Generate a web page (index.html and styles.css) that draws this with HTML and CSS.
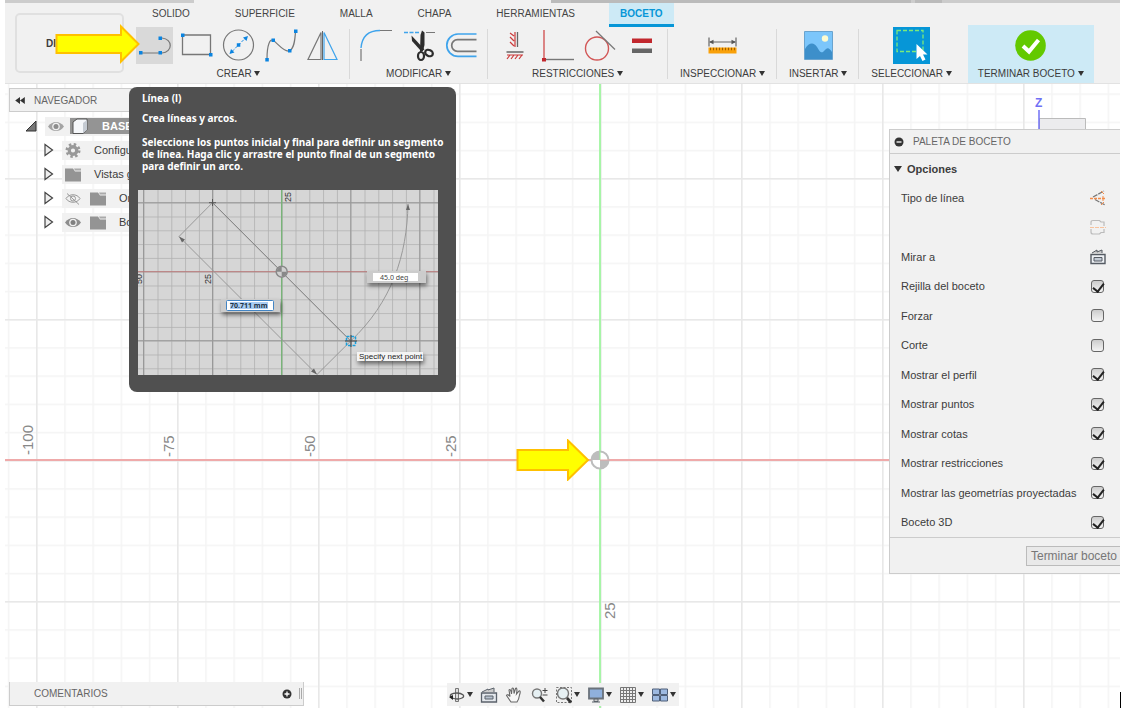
FILE: index.html
```html
<!DOCTYPE html>
<html lang="es">
<head>
    <meta charset="UTF-8">
    <meta name="viewport" content="width=device-width, initial-scale=1.0">
    <title>Boceto</title>
    <link rel="stylesheet" href="styles.css">
</head>
<body>
    <div class="app">
        <header class="ribbon">
            <div class="doc-strip"></div>
            <div class="ribbon-main">
                <button class="workspace-button" type="button">DISEÑO</button>
                <div class="ribbon-content">
                    <nav class="tabs">
                        <a class="tab" href="#">SOLIDO</a>
                        <a class="tab" href="#">SUPERFICIE</a>
                        <a class="tab" href="#">MALLA</a>
                        <a class="tab" href="#">CHAPA</a>
                        <a class="tab" href="#">HERRAMIENTAS</a>
                        <a class="tab active" href="#">BOCETO</a>
                    </nav>
                    <div class="groups">
                        <div class="group">
                            <div class="tools">
                                <button class="tool selected" type="button" aria-label="Línea">
                                    <svg viewBox="0 0 37 37"><g fill="none" stroke="#777" stroke-width="1.2"><path d="M6 26H24M26 11C37 12 37 25 26 26"/></g><g fill="#0b84e0"><path d="M3 24h3.500v3.500H3zM22.500 24h3.500v3.500h-3.500zM22.500 9.500h3.500v3.500h-3.500z"/></g></svg>
                                </button>
                                <button class="tool" type="button" aria-label="Rectángulo">
                                    <svg viewBox="0 0 37 37"><path d="M4.500 8h28v19.500h-28z" fill="none" stroke="#777" stroke-width="1.300"/><path d="M3 6.500h3.500V10H3zM31 26h3.500v3.500H31z" fill="#0b84e0"/></svg>
                                </button>
                                <button class="tool" type="button" aria-label="Círculo">
                                    <svg viewBox="0 0 37 37"><circle cx="18.500" cy="18" r="15" fill="none" stroke="#777" stroke-width="1.200"/><path d="M12 24.500 25 11.500" stroke="#1e8fe6" stroke-dasharray="3 1.500"/><path d="M16.800 16.300h3.500v3.500h-3.500zM28 9l-1.500 5-3.500-3.500zM9.500 27l1.500-5 3.500 3.500z" fill="#0b84e0"/></svg>
                                </button>
                                <button class="tool" type="button" aria-label="Spline">
                                    <svg viewBox="0 0 37 37"><path d="M5 32C5 18 8 11 11.500 13.500C16 17 22 25 27 24C32 22 33 14 33.500 4" fill="none" stroke="#777" stroke-width="1.200"/><path d="M3.300 31h3.500v3.500H3.300zM9.500 11.500H13V15H9.500zM26 22h3.500v3.500H26zM32 2.500h3.500V6H32z" fill="#0b84e0"/></svg>
                                </button>
                                <button class="tool" type="button" aria-label="Simetría">
                                    <svg viewBox="0 0 37 37"><path d="M17 5.500V32.500H4z" fill="none" stroke="#777" stroke-width="1.200"/><path d="M20 5.500V32.500H33z" fill="none" stroke="#3fa4ec" stroke-width="1.200"/><path d="M18.500 4v29" stroke="#666"/></svg>
                                </button>
                            </div>
                            <button class="menu" type="button">CREAR <i class="caret"></i></button>
                        </div>
                        <div class="group">
                            <div class="tools">
                                <button class="tool" type="button" aria-label="Empalme">
                                    <svg viewBox="0 0 37 37"><path d="M3 21C4 9 11 3.500 22 3.500" fill="none" stroke="#3fa4ec" stroke-width="1.400"/><path d="M22 3.500h12M3 22v12" stroke="#777" stroke-width="1.200"/></svg>
                                </button>
                                <button class="tool" type="button" aria-label="Recortar">
                                    <svg viewBox="0 0 37 37"><path d="M4 5.500h15" stroke="#3fa4ec" stroke-width="1.500" stroke-dasharray="4 1.500"/><path d="M26 5.500h9" stroke="#777"/><path d="M11.500 8.500 12 14 21 24 24.500 22.500z" fill="#2d2d2d"/><path d="M22 3.500 24.500 5.500V18L23 24 20 25 20.500 8z" fill="#2d2d2d"/><ellipse cx="21" cy="29" rx="3" ry="4" fill="none" stroke="#2d2d2d" stroke-width="2.200"/><ellipse cx="29" cy="26" rx="4" ry="3" fill="none" stroke="#2d2d2d" stroke-width="2.200" transform="rotate(25 29 26)"/></svg>
                                </button>
                                <button class="tool" type="button" aria-label="Desfase">
                                    <svg viewBox="0 0 37 37"><path d="M34.500 7H16a11.200 11.200 0 0 0 0 22.400h18.500" fill="none" stroke="#3fa4ec" stroke-width="1.700"/><path d="M34.500 12.700H15.500a5.700 5.700 0 0 0 0 11.600h19" fill="none" stroke="#777" stroke-width="1.700"/></svg>
                                </button>
                            </div>
                            <button class="menu" type="button">MODIFICAR <i class="caret"></i></button>
                        </div>
                        <div class="group">
                            <div class="tools">
                                <button class="tool" type="button" aria-label="Horizontal/Vertical">
                                    <svg viewBox="0 0 37 37"><path d="M19 5v15M11 28h16M18 28l-3 4M22 28l-3 4M26 28l-3 4M14 28l-3 4M18 9l-4-3M18 14l-4-4M18 19l-4-4" stroke="#cc3b3b" stroke-width="1.200"/><path d="M21.500 5v15M10.500 25h17" stroke="#666" stroke-width="1.300"/></svg>
                                </button>
                                <button class="tool" type="button" aria-label="Perpendicular">
                                    <svg viewBox="0 0 37 37"><path d="M6 3v29" stroke="#d25656" stroke-width="1.400"/><path d="M8 32.500h28" stroke="#777" stroke-width="1.400"/><path d="M4 31h4v3.500H4z" fill="#c1272d"/></svg>
                                </button>
                                <button class="tool" type="button" aria-label="Tangente">
                                    <svg viewBox="0 0 37 37"><circle cx="17" cy="21.500" r="11.500" fill="none" stroke="#d25656" stroke-width="1.400"/><path d="M16 4 35 22.500" stroke="#777" stroke-width="1.200"/></svg>
                                </button>
                                <button class="tool" type="button" aria-label="Igual">
                                    <svg viewBox="0 0 37 37"><path d="M10 11.500h20v4.500H10z" fill="#c1272d"/><path d="M10 21.500h20v4.500H10z" fill="#666"/></svg>
                                </button>
                            </div>
                            <button class="menu" type="button">RESTRICCIONES <i class="caret"></i></button>
                        </div>
                        <div class="group wide">
                            <div class="tools">
                                <button class="tool" type="button" aria-label="Medir">
                                    <svg viewBox="0 0 37 37"><path d="M5 10.500v9M32 10.500v9M6 15h25" stroke="#666" stroke-width="1.200"/><path d="M5 15l4.500-2.200v4.400zM32 15l-4.500-2.200v4.400z" fill="#555"/><path d="M4.500 20.500h28v6h-28z" fill="#f9a10a"/><path d="M6 22h25" stroke="#a05f00" stroke-width="2.500" stroke-dasharray="1 2"/></svg>
                                </button>
                            </div>
                            <button class="menu" type="button">INSPECCIONAR <i class="caret"></i></button>
                        </div>
                        <div class="group wide">
                            <div class="tools">
                                <button class="tool" type="button" aria-label="Insertar imagen">
                                    <svg viewBox="0 0 37 37"><path d="M4.500 4.500h28v28h-28z" fill="#7cc6fb" stroke="#6aa4cf"/><circle cx="25" cy="11.500" r="3.200" fill="#fdfbd0"/><path d="M5 22c4-7 9-7 12-2 3 5 4 6 6 5 4-4 5-6 9 0v7H5z" fill="#3d8fca"/></svg>
                                </button>
                            </div>
                            <button class="menu" type="button">INSERTAR <i class="caret"></i></button>
                        </div>
                        <div class="group wide">
                            <div class="tools">
                                <button class="tool" type="button" aria-label="Seleccionar">
                                    <svg viewBox="0 0 37 37"><path d="M0 0h37v37H0z" fill="#0696d7"/><path d="M4 3.500h26v21H4z" fill="none" stroke="#7bea7b" stroke-width="1.300" stroke-dasharray="4 2"/><path d="M23.500 17v15l3.500-3 2.500 5 3-1.500-2.500-5h4.500z" fill="#fff"/></svg>
                                </button>
                            </div>
                            <button class="menu" type="button">SELECCIONAR <i class="caret"></i></button>
                        </div>
                        <div class="group finish">
                            <div class="tools">
                                <button class="tool" type="button" aria-label="Terminar boceto">
                                    <svg viewBox="0 0 37 37"><circle cx="18.500" cy="18.500" r="15.300" fill="#63c900"/><path d="M11 19l6 5.500L26.500 13" fill="none" stroke="#fff" stroke-width="4"/></svg>
                                </button>
                            </div>
                            <button class="menu" type="button">TERMINAR BOCETO <i class="caret"></i></button>
                        </div>
                    </div>
                </div>
            </div>
        </header>

        <main class="canvas">
            <svg class="grid">
                <defs>
                    <pattern id="minor" x="595" y="376" width="28.200" height="28.200" patternUnits="userSpaceOnUse">
                        <path d="M0 0H28.200M0 0V28.200" stroke="#f4f4f4" stroke-width="3"/>
                    </pattern>
                    <pattern id="major" x="595" y="376" width="141" height="141" patternUnits="userSpaceOnUse">
                        <path d="M0 0H141M0 0V141" stroke="#e8e8e8" stroke-width="3"/>
                    </pattern>
                </defs>
                <rect width="100%" height="100%" fill="url(#minor)"/>
                <rect width="100%" height="100%" fill="url(#major)"/>
                <path d="M0 376H4000" stroke="#efaaaa" stroke-width="1.800"/>
                <path d="M595 0V4000" stroke="#a0f5a0" stroke-width="1.800"/>
                <g class="grid-numbers">
                    <text transform="translate(28 371) rotate(-90)">-100</text>
                    <text transform="translate(169 373) rotate(-90)">-75</text>
                    <text transform="translate(310 373) rotate(-90)">-50</text>
                    <text transform="translate(451 373) rotate(-90)">-25</text>
                    <text transform="translate(610 535) rotate(-90)">25</text>
                </g>
                <circle cx="595" cy="376" r="8.500" fill="#fff" stroke="#bdbdbd" stroke-width="2"/>
                <path d="M595 376V367.500A8.500 8.500 0 0 0 586.500 376zM595 376V384.500A8.500 8.500 0 0 0 603.500 376z" fill="#bdbdbd"/>
                <path d="M595 367v9" stroke="#98f098"/>
                <path d="M595 376h9" stroke="#e9a3a3"/>
            </svg>

            <svg class="view-cube" viewBox="0 0 56 40">
                <path d="M9.500 24.500h46V40h-46z" fill="#ececee" stroke="#bbb"/>
                <path d="M9 16v24" stroke="#7070f5" stroke-width="1.500"/>
                <text x="5" y="13">Z</text>
            </svg>

            <section class="browser">
                <h2 class="panel-title"><svg class="rewind" viewBox="0 0 11 8"><path d="M5.500 0v8L0 4zM11 0v8L5.500 4z" fill="#333"/></svg>NAVEGADOR</h2>
                <ul class="tree">
                    <li class="root">
                        <svg class="expander" viewBox="0 0 12 12"><path d="M11 1v10H1z" fill="#777" stroke="#333"/></svg>
                        <span class="node">
                            <svg class="eye" viewBox="0 0 16 12"><path d="M0 6C4 0 12 0 16 6C12 12 4 12 0 6z" fill="#a4a4a4"/><circle cx="8" cy="6" r="3.800" fill="#f1f1f1"/><circle cx="8" cy="6" r="2.500" fill="#8d8d8d"/></svg>
                            <span class="root-name"><svg class="cube" viewBox="0 0 18 18"><path d="M2 5l4-3h10v11l-4 3.500H2z" fill="#f5f7fa" stroke="#555"/><path d="M12 6v10l4-3V3z" fill="#c5cbd3"/></svg>BASE</span>
                        </span>
                    </li>
                    <li>
                        <svg class="expander" viewBox="0 0 12 14"><path d="M2 1.500v11l7.500-5.500z" fill="#eee" stroke="#444" stroke-width="1.200"/></svg>
                        <span class="node"><svg class="eye" viewBox="0 0 16 16"><circle cx="8" cy="8" r="4" fill="none" stroke="#999" stroke-width="3.500"/><circle cx="8" cy="8" r="6.500" fill="none" stroke="#999" stroke-width="3" stroke-dasharray="2.550 2.550"/></svg><span class="node-name">Configuración</span></span>
                    </li>
                    <li>
                        <svg class="expander" viewBox="0 0 12 14"><path d="M2 1.500v11l7.500-5.500z" fill="#eee" stroke="#444" stroke-width="1.200"/></svg>
                        <span class="node"><svg class="folder" viewBox="0 0 16 14"><path d="M0 1h8l2 3h6v10H0z" fill="#949494"/><path d="M9 1h7v2h-6z" fill="#aaa"/></svg><span class="node-name">Vistas guardadas</span></span>
                    </li>
                    <li>
                        <svg class="expander" viewBox="0 0 12 14"><path d="M2 1.500v11l7.500-5.500z" fill="#eee" stroke="#444" stroke-width="1.200"/></svg>
                        <span class="node"><svg class="eye" viewBox="0 0 16 12"><path d="M1 6C4 1 12 1 15 6C12 11 4 11 1 6zM2 1l12 11" fill="none" stroke="#999"/><circle cx="8" cy="6" r="2.500" fill="none" stroke="#999"/></svg><svg class="folder" viewBox="0 0 16 14"><path d="M0 1h8l2 3h6v10H0z" fill="#949494"/><path d="M9 1h7v2h-6z" fill="#aaa"/></svg><span class="node-name">Origen</span></span>
                    </li>
                    <li>
                        <svg class="expander" viewBox="0 0 12 14"><path d="M2 1.500v11l7.500-5.500z" fill="#eee" stroke="#444" stroke-width="1.200"/></svg>
                        <span class="node"><svg class="eye" viewBox="0 0 16 12"><path d="M0 6C4 0 12 0 16 6C12 12 4 12 0 6z" fill="#8d8d8d"/><circle cx="8" cy="6" r="3.800" fill="#f1f1f1"/><circle cx="8" cy="6" r="2.500" fill="#808080"/></svg><svg class="folder" viewBox="0 0 16 14"><path d="M0 1h8l2 3h6v10H0z" fill="#949494"/><path d="M9 1h7v2h-6z" fill="#aaa"/></svg><span class="node-name">Bocetos</span></span>
                    </li>
                </ul>
            </section>

            <aside class="tooltip">
                <p class="tooltip-title">Línea (l)</p>
                <p class="tooltip-lead">Crea líneas y arcos.</p>
                <p class="tooltip-text">Seleccione los puntos inicial y final para definir un segmento de línea. Haga clic y arrastre el punto final de un segmento para definir un arco.</p>
                <svg class="tooltip-picture" viewBox="0 0 300 185">
                    <defs>
                        <pattern id="tipMinor" x="143.700" y="81.700" width="13.800" height="13.800" patternUnits="userSpaceOnUse">
                            <path d="M0 0H13.800M0 0V13.800" stroke="#b0b0b0" stroke-width="1.600"/>
                        </pattern>
                        <filter id="shadow"><feDropShadow dx="1" dy="3" stdDeviation="2" flood-opacity="0.5"/></filter>
                    </defs>
                    <rect width="300" height="185" fill="#d6d6d6"/>
                    <rect width="300" height="185" fill="url(#tipMinor)"/>
                    <path d="M5.500 0V185M74.500 0V185M212.700 0V185M281.700 0V185M0 12.700H300M0 150.700H300" stroke="#999"/>
                    <path d="M0 81.700H300" stroke="#b87878"/>
                    <path d="M143.700 0V185" stroke="#74b374" stroke-width="1.300"/>
                    <path d="M74.500 12.700 212.700 151" stroke="#777"/>
                    <path d="M74.500 12.700 41 46.500 179 184.500 212.700 151C254 112 269 65 270 14" fill="none" stroke="#999"/>
                    <path d="M41 46.500l6 3-3 3zM179 184.500l-6-3 3-3zM270 14l-2 6h4z" fill="#666"/>
                    <path d="M71 12.700h7M74.500 9v7" stroke="#555"/>
                    <circle cx="143.700" cy="81.700" r="5.500" fill="#d0d0d0" stroke="#888" stroke-width="1.500"/>
                    <path d="M143.700 81.700v-5a5 5 0 0 0-5 5zM143.700 81.700v5a5 5 0 0 0 5-5z" fill="#888"/>
                    <path d="M208.500 146.500h9v9h-9z" fill="none" stroke="#19a0dd" stroke-width="1.500" stroke-dasharray="3 1.500"/>
                    <path d="M207 151h12M213 145v12" stroke="#444"/>
                    <g filter="url(#shadow)">
                        <rect x="83" y="109" width="59" height="13" fill="#ccc"/>
                        <rect x="229" y="81" width="59" height="12" fill="#ccc"/>
                        <rect x="219" y="162" width="66" height="9" fill="#f4f4f4"/>
                    </g>
                    <rect x="88.500" y="110.500" width="47" height="10" rx="1" fill="#fff" stroke="#4385c4"/>
                    <rect x="92" y="112" width="38" height="7" fill="#a9cdf3"/>
                    <rect x="235" y="83" width="45" height="8" fill="#fff"/>
                    <text class="tip-value" x="92" y="118">70.711 mm</text>
                    <text class="tip-value light" x="242" y="90">45.0 deg</text>
                    <text class="tip-prompt" x="221" y="169">Specify next point</text>
                    <text class="tip-number" transform="translate(153 12) rotate(-90)">25</text>
                    <text class="tip-number" transform="translate(73 94) rotate(-90)">25</text>
                    <text class="tip-number" transform="translate(4 94) rotate(-90)">50</text>
                </svg>
            </aside>

            <form class="palette">
                <h2 class="panel-title"><svg class="dot" viewBox="0 0 10 10"><circle cx="5" cy="5" r="4.500" fill="#333"/><path d="M2.500 5h5" stroke="#fff" stroke-width="1.300"/></svg>PALETA DE BOCETO</h2>
                <h3 class="palette-section"><i class="caret"></i>Opciones</h3>
                <ul class="options">
                    <li><span>Tipo de línea</span>
                        <button class="option-button" type="button" aria-label="Construcción"><svg viewBox="0 0 16 16"><path d="M3 7 14 1M5 9.500 15 15" stroke="#777" stroke-width="1.200" stroke-dasharray="5 1"/><path d="M0 8.500h16" stroke="#f28c4b" stroke-width="1.300" stroke-dasharray="3 1"/><path d="M11 1l3 3M11 15l3-3M13 6v5" stroke="#f28c4b"/></svg></button></li>
                    <li><span></span>
                        <button class="option-button" type="button" aria-label="Línea central"><svg viewBox="0 0 16 16"><path d="M1 6V3.500Q1 1.500 3 1.500H9.500L11 3h3v4M1 10v3q0 2 2 2h6.500L11 13.500h3V10" fill="none" stroke="#bbb" stroke-width="1.200"/><path d="M0 8.500h16" stroke="#f7c39e" stroke-dasharray="4 1"/></svg></button></li>
                    <li><span>Mirar a</span>
                        <button class="option-button" type="button" aria-label="Mirar a"><svg viewBox="0 0 16 16"><path d="M1 5.500h14v9H1z" fill="#eef1f5" stroke="#555b63" stroke-width="1.400"/><path d="M4 8.500h8v3.500H4z" fill="#c2cad5" stroke="#555b63"/><path d="M2 4l5-3v2l5-2v3" fill="#ccc" stroke="#555b63"/></svg></button></li>
                    <li><label for="rejilla">Rejilla del boceto</label><input type="checkbox" id="rejilla" checked></li>
                    <li><label for="forzar">Forzar</label><input type="checkbox" id="forzar"></li>
                    <li><label for="corte">Corte</label><input type="checkbox" id="corte"></li>
                    <li><label for="perfil">Mostrar el perfil</label><input type="checkbox" id="perfil" checked></li>
                    <li><label for="puntos">Mostrar puntos</label><input type="checkbox" id="puntos" checked></li>
                    <li><label for="cotas">Mostrar cotas</label><input type="checkbox" id="cotas" checked></li>
                    <li><label for="restricciones">Mostrar restricciones</label><input type="checkbox" id="restricciones" checked></li>
                    <li><label for="geometrias">Mostrar las geometrías proyectadas</label><input type="checkbox" id="geometrias" checked></li>
                    <li><label for="boceto3d">Boceto 3D</label><input type="checkbox" id="boceto3d" checked></li>
                </ul>
                <div class="palette-footer">
                    <button class="finish-button" type="button">Terminar boceto</button>
                </div>
            </form>

            <section class="comments">
                <h2 class="comments-title">COMENTARIOS</h2>
                <svg class="dot" viewBox="0 0 10 10"><circle cx="5" cy="5" r="4.500" fill="#333"/><path d="M2.500 5h5M5 2.500v5" stroke="#fff" stroke-width="1.300"/></svg>
                <span class="grip"></span>
            </section>

            <div class="view-bar">
                <button class="view-button" type="button" aria-label="Órbita"><svg viewBox="0 0 18 18"><path d="M7.500 2.500h3v13h-3z" fill="#ddd" stroke="#777"/><path d="M4 12C0 9 4 7 9 7s9 3 5 5-7 1-10 0" fill="none" stroke="#555" stroke-width="1.300"/><path d="M1 11l4-2v5z" fill="#222"/></svg><i class="caret"></i></button>
                <button class="view-button" type="button" aria-label="Mirar a"><svg viewBox="0 0 18 18"><path d="M1.500 7h15v9h-15z" fill="#e4e8ed" stroke="#5b626b" stroke-width="1.300"/><path d="M5 10h8v3H5z" fill="#b8c2cf" stroke="#5b626b"/><path d="M2 6l6-3v1l6-2v4" fill="#ccc" stroke="#5b626b"/></svg></button>
                <button class="view-button" type="button" aria-label="Encuadre"><svg viewBox="0 0 18 18"><path d="M6 16 1.500 9.500C2 8 4 9 5 10.500L4 4c1-1.500 2 0 2.500 4L7 2.500c1-1.500 2 0 2 5l1.500-5c1-1 2 0 1 5.500L14 5c1.500-.5 1.500 1 .5 4-.5 4-1 5-2.500 7z" fill="#f7f7f7" stroke="#666" stroke-width="1.100"/></svg></button>
                <button class="view-button" type="button" aria-label="Zoom"><svg viewBox="0 0 18 18"><circle cx="7" cy="7.500" r="4.500" fill="#e6f0f3" stroke="#777" stroke-width="1.400"/><path d="M10 11l4 4.500" stroke="#333" stroke-width="2.500"/><path d="M12.500 4.500h5M15 2v5M12.500 9h5" stroke="#444"/></svg></button>
                <button class="view-button" type="button" aria-label="Ajustar"><svg viewBox="0 0 18 18"><path d="M1.500 1.500h15v15h-15z" fill="none" stroke="#777" stroke-dasharray="2 1.500"/><circle cx="8" cy="7.500" r="5.500" fill="#e6f0f3" stroke="#777" stroke-width="1.400"/><path d="M12 12l4 4.500" stroke="#333" stroke-width="2.700"/></svg><i class="caret"></i></button>
                <button class="view-button" type="button" aria-label="Visualización"><svg viewBox="0 0 18 18"><path d="M2 2.500h14v10H2z" fill="#8fb0dc" stroke="#6b727b" stroke-width="1.800"/><path d="M7 13h4v2.500H7zM5 16h8" fill="#ccc" stroke="#5b626b"/></svg><i class="caret"></i></button>
                <button class="view-button" type="button" aria-label="Rejilla"><svg viewBox="0 0 18 18"><path d="M1.500 1.500h15v15h-15zM4.500 1.500v15M7.500 1.500v15M10.500 1.500v15M13.500 1.500v15M1.500 4.500h15M1.500 7.500h15M1.500 10.500h15M1.500 13.500h15" fill="#eee" stroke="#777"/></svg><i class="caret"></i></button>
                <button class="view-button" type="button" aria-label="Ventanas"><svg viewBox="0 0 18 18"><path d="M1.500 3h7v5.500h-7zM9.500 3h7v5.500h-7zM1.500 9.500h7V15h-7zM9.500 9.500h7V15h-7z" fill="#9db9e0" stroke="#4e5f78"/></svg><i class="caret"></i></button>
            </div>
        </main>

        <!-- yellow pointers over the interface -->
        <svg class="pointer pointer-tool" viewBox="0 0 86 40"><path d="M1.500 11H66V2.500L83.500 20 66 37.500V29H1.500z"/></svg>
        <svg class="pointer pointer-origin" viewBox="0 0 74 42"><path d="M1.500 11H52V1.500L72 21 52 40.500V31H1.500z"/></svg>
        <span class="text-cursor"></span>
    </div>
</body>
</html>
```
FILE: styles.css
```css
* {
    box-sizing: border-box;
}

body {
    margin: 0;
    background-color: #fff;
    color: #3c3c3c;
    font-family: "Liberation Sans", Arial, sans-serif;
    font-size: 11px;
}

h2, h3, p, ul {
    margin: 0;
    padding: 0;
    list-style: none;
}

button {
    padding: 0;
    border: 0;
    background: none;
    color: inherit;
    font: inherit;
    cursor: pointer;
}

svg {
    display: block;
    flex: none;
}

.app {
    position: relative;
    display: flex;
    flex-direction: column;
    height: 100vh;
    margin: 0 10px 0 5px;
}

.caret {
    display: inline-block;
    border: 3px solid transparent;
    border-top: 5px solid #333;
    border-bottom: 0;
    vertical-align: 1px;
}

/* ribbon */
.ribbon {
    background-color: #f1f1f1;
    border-bottom: 1px solid #e2e2e2;
}

.doc-strip {
    height: 3px;
    background: linear-gradient(to right, #ccc 189px, #f1f1f1 189px, #f1f1f1 546px, #bbb 546px, #bbb 906px, #ccc 906px, #ccc 910px, #bbb 910px, #bbb 937px, #ccc 937px);
}

.ribbon-main {
    display: flex;
    gap: 12px;
    padding-left: 10px;
}

.workspace-button {
    flex: none;
    width: 109px;
    height: 60px;
    margin-top: 10px;
    padding-left: 29px;
    border: 2px solid #e0e0e0;
    border-radius: 5px;
    font-size: 10px;
    font-weight: bold;
    text-align: left;
}

.ribbon-content {
    flex: 1;
}

.tabs {
    display: flex;
    gap: 23px;
    padding-left: 5px;
}

.tab {
    height: 24px;
    padding: 0 11px;
    color: #444;
    font-size: 10px;
    line-height: 22px;
    text-decoration: none;
}

.tab.active {
    border-bottom: 3px solid #0696d7;
    background-color: #cdeaf6;
    color: #0696d7;
    font-weight: bold;
}

.groups {
    display: flex;
    height: 56px;
}

.group {
    position: relative;
    display: flex;
    flex-direction: column;
    align-items: center;
    padding: 0 9px 0 8px;
}

.group:first-child {
    padding-left: 0;
}

.group:not(:nth-last-child(-n+2)) {
    background: linear-gradient(#d9d9d9, #d9d9d9) right 2px / 1px 50px no-repeat;
}

.group.wide {
    padding: 0 12px;
}

.tools {
    display: flex;
    gap: 5px;
}

.tool {
    width: 37px;
    height: 37px;
}

.tool.selected {
    background-color: #d9d9d9;
}

.menu {
    margin-top: 3px;
    font-size: 10px;
    line-height: 14px;
    white-space: nowrap;
}

.group.finish {
    margin: -2px 0 0 4px;
    padding: 2px 10px 0;
    background-color: #cdeaf6;
}

/* drawing area */
.canvas {
    position: relative;
    flex: 1;
    overflow: hidden;
}

.grid {
    position: absolute;
    inset: 0;
    width: 100%;
    height: 100%;
}

.grid-numbers {
    fill: #888;
    font-size: 15px;
}

.view-cube {
    position: absolute;
    top: 10px;
    right: 34px;
    width: 56px;
    height: 40px;
    fill: #7070f5;
    font-size: 12px;
    font-weight: bold;
}

.panel-title {
    display: flex;
    align-items: center;
    height: 24px;
    color: #666;
    font-size: 10px;
    font-weight: normal;
}

.dot {
    width: 10px;
    height: 10px;
}

/* browser */
.browser {
    position: absolute;
    top: 4px;
    left: 4px;
    width: 240px;
}

.browser .panel-title {
    gap: 9px;
    padding-left: 5px;
    border: 1px solid #ccc;
    background-color: #f1f1f1;
}

.rewind {
    width: 10px;
    height: 7px;
}

.tree {
    padding-top: 2px;
}

.tree li {
    display: flex;
    align-items: center;
    gap: 7px;
    height: 24px;
    padding-left: 34px;
}

.tree .root {
    gap: 8px;
    padding-left: 16px;
}

.expander {
    width: 12px;
    height: 14px;
}

.node {
    display: flex;
    flex: 1;
    align-items: center;
    gap: 9px;
    height: 19px;
    padding-left: 3px;
    background-color: #f1f1f1;
}

.eye, .folder {
    width: 16px;
    height: 15px;
}

.node-name {
    margin-left: 4px;
    white-space: nowrap;
}

.root .node {
    gap: 6px;
}

.root-name {
    display: flex;
    flex: 1;
    align-items: center;
    gap: 13px;
    height: 16px;
    padding-left: 1px;
    background-color: #949494;
    color: #fff;
    font-weight: bold;
}

.cube {
    width: 18px;
    height: 18px;
}

/* tooltip */
.tooltip {
    position: absolute;
    top: 3px;
    left: 124px;
    width: 327px;
    padding: 5px 9px 17px;
    border-radius: 8px;
    background-color: #505050;
    color: #fff;
    font-family: "Noto Sans", "Open Sans", sans-serif;
    font-size: 10px;
    font-weight: bold;
    line-height: 12px;
}

.tooltip p {
    padding-left: 4px;
}

.tooltip-lead {
    margin: 8px 0 12px;
}

.tooltip-picture {
    width: 300px;
    height: 185px;
    margin-top: 18px;
}

.tip-value {
    fill: #234;
    font-size: 7px;
}

.tip-value.light {
    fill: #444;
    font-weight: normal;
}

.tip-prompt {
    fill: #222;
    font-family: "Liberation Sans", Arial, sans-serif;
    font-size: 8px;
    font-weight: normal;
}

.tip-number {
    fill: #333;
    font-family: "Liberation Sans", Arial, sans-serif;
    font-size: 9px;
    font-weight: normal;
}

/* sketch palette */
.palette {
    position: absolute;
    top: 45px;
    right: 0;
    width: 231px;
    border: 1px solid #ccc;
    border-right: 0;
    background-color: #f1f1f1;
    overflow: hidden;
}

.palette .panel-title {
    gap: 9px;
    padding-left: 4px;
    border-bottom: 1px solid #ccc;
}

.palette-section {
    display: flex;
    align-items: center;
    gap: 5px;
    height: 29px;
    padding-left: 4px;
    font-size: 11px;
}

.palette-section .caret {
    border-width: 6px 4px 0;
}

.options li {
    display: flex;
    align-items: center;
    justify-content: space-between;
    height: 29px;
    padding: 0 16px 0 11px;
}

.options li:nth-child(even) {
    height: 30px;
}

.option-button {
    width: 16px;
    height: 16px;
    margin-right: -2px;
}

.options input {
    appearance: none;
    position: relative;
    width: 13px;
    height: 13px;
    margin: 0;
    border: 1px solid #666;
    border-radius: 3px;
    background: linear-gradient(#ccc, #f4f4f4);
}

.options input:checked::after {
    content: "";
    position: absolute;
    top: 0;
    left: 3px;
    width: 5px;
    height: 9px;
    border: solid #222;
    border-width: 0 2px 2px 0;
    transform: rotate(38deg);
}

.palette-footer {
    display: flex;
    justify-content: flex-end;
    padding: 8px 0 7px;
    border-top: 1px solid #ccc;
}

.finish-button {
    height: 20px;
    padding: 0 3px 0 4px;
    border: 1px solid #bbb;
    border-right: 0;
    background-color: #e9e9e9;
    color: #777;
    font-size: 12px;
}

/* bottom bars */
.comments {
    position: absolute;
    bottom: 2px;
    left: 4px;
    display: flex;
    align-items: center;
    gap: 7px;
    width: 295px;
    height: 24px;
    padding: 0 1px 0 24px;
    border: 1px solid #ccc;
    border-top: 0;
    background-color: #f1f1f1;
}

.comments-title {
    flex: 1;
    color: #666;
    font-size: 10px;
    font-weight: normal;
}

.grip {
    width: 3px;
    height: 11px;
    border: solid #aaa;
    border-width: 0 1px;
}

.view-bar {
    position: absolute;
    bottom: 2px;
    left: 50%;
    display: flex;
    align-items: center;
    justify-content: space-between;
    width: 232px;
    height: 23px;
    padding: 0 3px 0 1px;
    background-color: #f1f1f1;
    transform: translateX(-50%);
}

.view-button {
    display: flex;
    align-items: center;
    gap: 1px;
}

.view-button svg {
    width: 18px;
    height: 18px;
}

/* pointers */
.pointer {
    position: absolute;
    fill: #ff0;
    stroke: #ffc000;
    stroke-width: 2px;
}

.pointer-tool {
    top: 24px;
    left: 50px;
    width: 86px;
    height: 40px;
}

.pointer-origin {
    top: 439px;
    left: 511px;
    width: 74px;
    height: 42px;
}

.text-cursor {
    position: absolute;
    right: -1px;
    bottom: 0;
    width: 1px;
    height: 16px;
    background-color: #000;
}
```
